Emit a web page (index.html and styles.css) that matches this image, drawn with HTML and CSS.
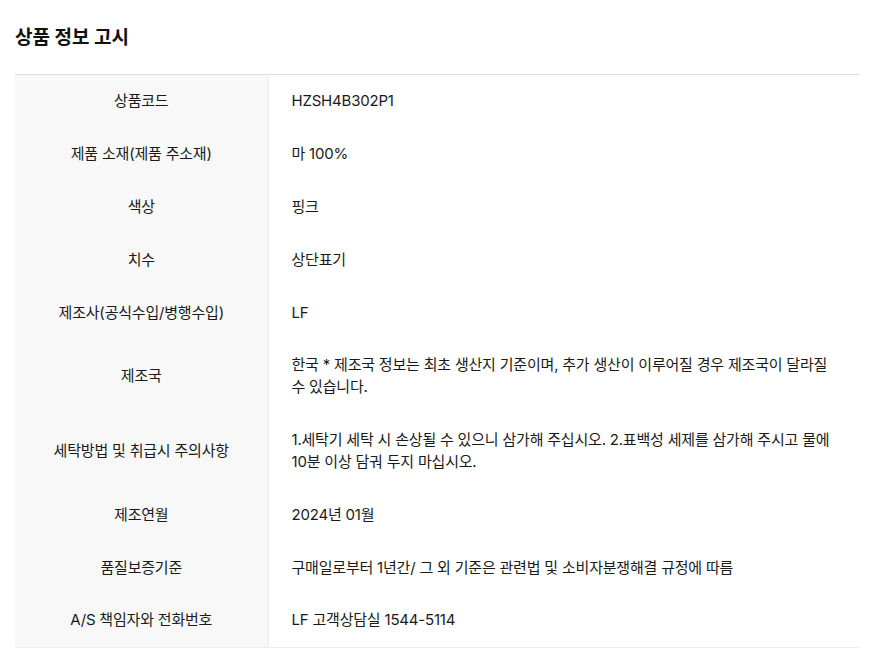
FILE: index.html
```html
<!DOCTYPE html>
<html lang="ko">
<head>
<meta charset="utf-8">
<link rel="stylesheet" href="styles.css">
</head>
<body>
<section class="notice">
  <h2 class="title">상품 정보 고시</h2>
  <table class="info">
    <colgroup><col class="c-head"><col class="c-val"></colgroup>
    <tbody>
      <tr><th>상품코드</th><td>HZSH4B302P1</td></tr>
      <tr><th>제품 소재(제품 주소재)</th><td>마 100%</td></tr>
      <tr><th>색상</th><td>핑크</td></tr>
      <tr><th>치수</th><td>상단표기</td></tr>
      <tr><th>제조사(공식수입/병행수입)</th><td>LF</td></tr>
      <tr><th>제조국</th><td>한국 * 제조국 정보는 최초 생산지 기준이며, 추가 생산이 이루어질 경우 제조국이 달라질 수 있습니다.</td></tr>
      <tr><th>세탁방법 및 취급시 주의사항</th><td>1.세탁기 세탁 시 손상될 수 있으니 삼가해 주십시오. 2.표백성 세제를 삼가해 주시고 물에 10분 이상 담궈 두지 마십시오.</td></tr>
      <tr><th>제조연월</th><td>2024년 01월</td></tr>
      <tr><th>품질보증기준</th><td>구매일로부터 1년간/ 그 외 기준은 관련법 및 소비자분쟁해결 규정에 따름</td></tr>
      <tr><th>A/S 책임자와 전화번호</th><td>LF 고객상담실 1544-5114</td></tr>
    </tbody>
  </table>
</section>
</body>
</html>
```

FILE: styles.css
```css
html, body {
  margin: 0;
  padding: 0;
  background: #fff;
}
body {
  font-family: "Inter", "Noto Sans CJK KR", sans-serif;
  color: #1a1a1a;
}
.notice {
  padding: 24px 37px 0 15px;
}
.title {
  margin: 0 0 22px;
  font-size: 19px;
  line-height: 28px;
  font-weight: 700;
  color: #111;
}
.info {
  width: 844px;
  border-collapse: collapse;
  table-layout: fixed;
  border-top: 1px solid #dddddd;
  border-bottom: 1px solid #eeeeee;
  font-size: 15px;
  line-height: 22px;
  letter-spacing: -0.2px;
  word-break: keep-all;
}
.c-head { width: 253px; }
.info th {
  background: #f8f8f8;
  font-weight: 400;
  text-align: center;
  padding: 15.4px 10px;
  border-right: 1px solid #eeeeee;
  vertical-align: middle;
}
.info td {
  padding: 15.4px 24px 15.4px 23px;
  text-align: left;
  vertical-align: middle;
}
```
